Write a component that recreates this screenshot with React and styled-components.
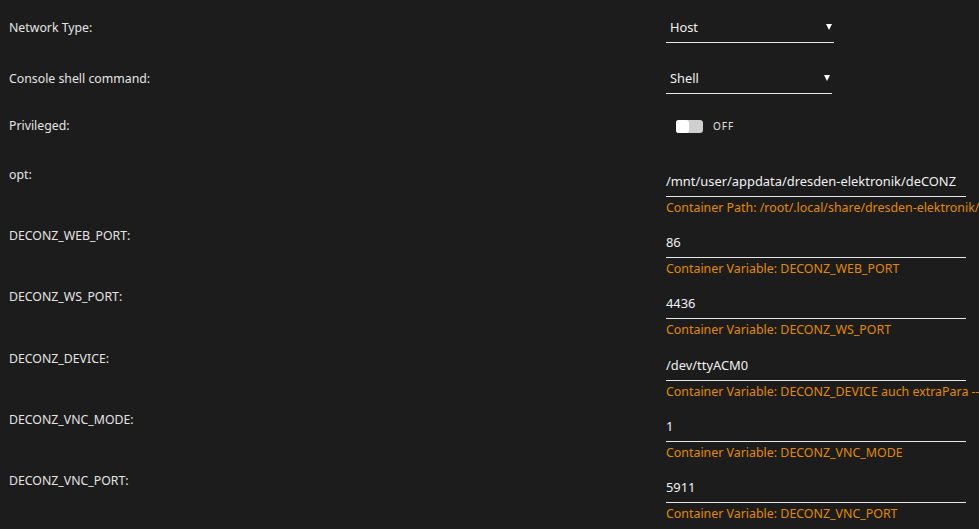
import React from 'react'
import styled, {createGlobalStyle} from 'styled-components'

const Global = createGlobalStyle`
  html, body {
    margin: 0;
    background: #1c1c1c;
    overflow: hidden;
  }
  body {
    font-family: "Noto Sans", "Open Sans", sans-serif;
    color: #e4e4e4;
  }
`

const Page = styled.div`
  display: flex;
  flex-direction: column;
  width: 979px;
  height: 529px;
  padding-left: 9px;
  box-sizing: border-box;
`

const Row = styled.div`
  display: grid;
  grid-template-columns: 657px 1fr;
  align-items: start;
  margin-top: ${p => p.$mt || 0}px;
`

const Label = styled.div`
  font-size: 12.3px;
  line-height: 16px;
  padding-top: ${p => p.$pt || 0}px;
  white-space: nowrap;
`

const Field = styled.div`
  display: flex;
  flex-direction: column;
  min-width: 0;
`

const Select = styled.div`
  position: relative;
  width: ${p => p.$w}px;
  height: 32px;
  line-height: 32px;
  padding-left: 4px;
  box-sizing: border-box;
  border-bottom: 1px solid #e6e6e6;
  font-size: 12.8px;
  color: #f0f0f0;
  &::after {
    content: '';
    position: absolute;
    right: ${p => p.$arrow}px;
    top: 13px;
    border-left: 3px solid transparent;
    border-right: 3px solid transparent;
    border-top: 6px solid #fff;
  }
`

const Input = styled.div`
  width: 300px;
  height: 30px;
  line-height: 30px;
  border-bottom: 1px solid #e6e6e6;
  font-size: 12.9px;
  color: #f0f0f0;
  white-space: nowrap;
`

const Help = styled.div`
  margin-top: 3px;
  font-size: 12.4px;
  line-height: 16px;
  color: #e08a00;
  white-space: nowrap;
`

const SwitchWrap = styled.div`
  display: flex;
  align-items: center;
  height: 22px;
  padding-left: 10px;
`

const Track = styled.div`
  position: relative;
  width: 27px;
  height: 13px;
  border-radius: 3px;
  background: #cfcfcf;
  &::before {
    content: '';
    position: absolute;
    left: 0;
    top: 0;
    width: 13px;
    height: 13px;
    border-radius: 3px;
    background: #fff;
  }
`

const SwitchText = styled.span`
  margin-left: 10px;
  font-size: 10px;
  letter-spacing: 1px;
  color: #e0e0e0;
`

const inputs = [
  ['opt:', '/mnt/user/appdata/dresden-elektronik/deCONZ', 'Container Path: /root/.local/share/dresden-elektronik/deCONZ'],
  ['DECONZ_WEB_PORT:', '86', 'Container Variable: DECONZ_WEB_PORT'],
  ['DECONZ_WS_PORT:', '4436', 'Container Variable: DECONZ_WS_PORT'],
  ['DECONZ_DEVICE:', '/dev/ttyACM0', 'Container Variable: DECONZ_DEVICE auch extraPara --device=/dev/ttyACM0'],
  ['DECONZ_VNC_MODE:', '1', 'Container Variable: DECONZ_VNC_MODE'],
  ['DECONZ_VNC_PORT:', '5911', 'Container Variable: DECONZ_VNC_PORT'],
]

export default function App() {
  return (
    <Page>
      <Global />
      <Row $mt={11}>
        <Label $pt={9}>Network Type:</Label>
        <Select $w={168} $arrow={2}>Host</Select>
      </Row>
      <Row $mt={19}>
        <Label $pt={9}>Console shell command:</Label>
        <Select $w={166} $arrow={2}>Shell</Select>
      </Row>
      <Row $mt={21}>
        <Label $pt={3}>Privileged:</Label>
        <SwitchWrap>
          <Track />
          <SwitchText>OFF</SwitchText>
        </SwitchWrap>
      </Row>
      {inputs.map(([label, value, help], i) => (
        <Row key={label} $mt={i === 0 ? 29 : 11.2}>
          <Label $pt={1}>{label}</Label>
          <Field>
            <Input>{value}</Input>
            <Help>{help}</Help>
          </Field>
        </Row>
      ))}
    </Page>
  )
}
